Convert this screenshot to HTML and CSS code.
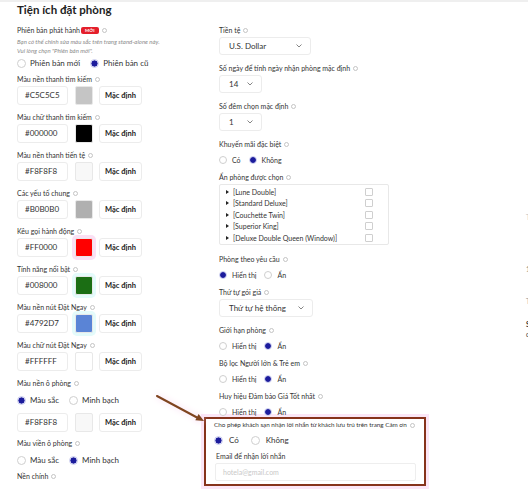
FILE: index.html
```html
<!DOCTYPE html>
<html lang="vi">
<head>
<meta charset="utf-8">
<link rel="stylesheet" href="styles.css">
</head>
<body>
<div class="topbar"></div>
<div class="page">
  <h1 class="title">Tiện ích đặt phòng</h1>
  <div class="cols">
    <div class="col left">
      <div class="lbl">Phiên bản phát hành<span class="badge">MỚI</span><i class="info"></i></div>
      <p class="desc">Bạn có thể chỉnh sửa màu sắc trên trang stand-alone này.<br>Vui lòng chọn "Phiên bản mới".</p>
      <div class="radios big first">
        <span class="opt"><i class="rd"></i>Phiên bản mới</span>
        <span class="opt"><i class="rd on"></i>Phiên bản cũ</span>
      </div>

      <div class="lbl">Màu nền thanh tìm kiếm<i class="info"></i></div>
      <div class="crow"><span class="cin">#C5C5C5</span><span class="sw" style="background:#C5C5C5"></span><span class="btn">Mặc định</span></div>

      <div class="lbl">Màu chữ thanh tìm kiếm<i class="info"></i></div>
      <div class="crow"><span class="cin">#000000</span><span class="sw" style="background:#000000"></span><span class="btn">Mặc định</span></div>

      <div class="lbl">Màu nền thanh tiến tệ<i class="info"></i></div>
      <div class="crow"><span class="cin">#F8F8F8</span><span class="sw" style="background:#F8F8F8"></span><span class="btn">Mặc định</span></div>

      <div class="lbl">Các yếu tố chung<i class="info"></i></div>
      <div class="crow"><span class="cin">#B0B0B0</span><span class="sw" style="background:#B0B0B0"></span><span class="btn">Mặc định</span></div>

      <div class="lbl">Kêu gọi hành động<i class="info"></i></div>
      <div class="crow"><span class="cin">#FF0000</span><span class="sw halo-pink" style="background:#FF0000"></span><span class="btn">Mặc định</span></div>

      <div class="lbl">Tính năng nổi bật<i class="info"></i></div>
      <div class="crow"><span class="cin">#008000</span><span class="sw halo-cyan" style="background:#1b6e14"></span><span class="btn">Mặc định</span></div>

      <div class="lbl">Màu nền nút Đặt Ngay<i class="info"></i></div>
      <div class="crow"><span class="cin">#4792D7</span><span class="sw halo-cyan" style="background:#5a84d6"></span><span class="btn">Mặc định</span></div>

      <div class="lbl">Màu chữ nút Đặt Ngay<i class="info"></i></div>
      <div class="crow"><span class="cin">#FFFFFF</span><span class="sw" style="background:#FFFFFF"></span><span class="btn">Mặc định</span></div>

      <div class="lbl">Màu nền ô phòng<i class="info"></i></div>
      <div class="radios big withrow">
        <span class="opt"><i class="rd on"></i>Màu sắc</span>
        <span class="opt"><i class="rd"></i>Minh bạch</span>
      </div>
      <div class="crow after"><span class="cin">#F8F8F8</span><span class="sw" style="background:#F8F8F8"></span><span class="btn">Mặc định</span></div>

      <div class="lbl">Màu viền ô phòng<i class="info"></i></div>
      <div class="radios big plain">
        <span class="opt"><i class="rd"></i>Màu sắc</span>
        <span class="opt"><i class="rd on"></i>Minh bạch</span>
      </div>

      <div class="lbl">Nền chính<i class="info"></i></div>
      <div class="radios big plain">
        <span class="opt"><i class="rd"></i>Màu sắc</span>
        <span class="opt"><i class="rd on"></i>Minh bạch</span>
      </div>
    </div>

    <div class="col right">
      <div class="lbl">Tiền tệ<i class="info"></i></div>
      <div class="sel w92">U.S. Dollar<svg class="chev" viewBox="0 0 6 4"><polyline points="0.5,0.5 3,3 5.5,0.5"/></svg></div>

      <div class="lbl">Số ngày để tính ngày nhận phòng mặc định<i class="info"></i></div>
      <div class="sel w43">14<svg class="chev" viewBox="0 0 6 4"><polyline points="0.5,0.5 3,3 5.5,0.5"/></svg></div>

      <div class="lbl">Số đêm chọn mặc định<i class="info"></i></div>
      <div class="sel w43">1<svg class="chev" viewBox="0 0 6 4"><polyline points="0.5,0.5 3,3 5.5,0.5"/></svg></div>

      <div class="lbl">Khuyến mãi đặc biệt<i class="info"></i></div>
      <div class="radios small">
        <span class="opt"><i class="rd"></i>Có</span>
        <span class="opt"><i class="rd on"></i>Không</span>
      </div>

      <div class="lbl">Ẩn phòng được chọn<i class="info"></i></div>
      <ul class="hidebox">
        <li class="hitem"><span class="tri"></span><span class="hname">[Lune Double]</span><span class="cb"></span></li>
        <li class="hitem"><span class="tri"></span><span class="hname">[Standard Deluxe]</span><span class="cb"></span></li>
        <li class="hitem"><span class="tri"></span><span class="hname">[Couchette Twin]</span><span class="cb"></span></li>
        <li class="hitem"><span class="tri"></span><span class="hname">[Superior King]</span><span class="cb"></span></li>
        <li class="hitem"><span class="tri"></span><span class="hname">[Deluxe Double Queen (Window)]</span><span class="cb"></span></li>
      </ul>

      <div class="lbl">Phòng theo yêu cầu<i class="info"></i></div>
      <div class="radios small">
        <span class="opt"><i class="rd on"></i>Hiển thị</span>
        <span class="opt"><i class="rd"></i>Ẩn</span>
      </div>

      <div class="lbl">Thứ tự gói giá<i class="info"></i></div>
      <div class="sel w94">Thứ tự hệ thống<svg class="chev" viewBox="0 0 6 4"><polyline points="0.5,0.5 3,3 5.5,0.5"/></svg></div>

      <div class="lbl">Giới hạn phòng<i class="info"></i></div>
      <div class="radios small">
        <span class="opt"><i class="rd"></i>Hiển thị</span>
        <span class="opt"><i class="rd on"></i>Ẩn</span>
      </div>

      <div class="lbl">Bộ lọc Người lớn &amp; Trẻ em<i class="info"></i></div>
      <div class="radios small">
        <span class="opt"><i class="rd"></i>Hiển thị</span>
        <span class="opt"><i class="rd on"></i>Ẩn</span>
      </div>

      <div class="lbl">Huy hiệu Đảm bảo Giá Tốt nhất<i class="info"></i></div>
      <div class="radios small last">
        <span class="opt"><i class="rd"></i>Hiển thị</span>
        <span class="opt"><i class="rd on"></i>Ẩn</span>
      </div>

      <div class="msgbox">
        <div class="lbl msg">Cho phép khách sạn nhận lời nhắn từ khách lưu trú trên trang Cảm ơn<i class="info"></i></div>
        <div class="radios big inbox">
          <span class="opt"><i class="rd on"></i>Có</span>
          <span class="opt"><i class="rd"></i>Không</span>
        </div>
        <div class="lbl email">Email để nhận lời nhắn</div>
        <div class="emailin">hotela@gmail.com</div>
      </div>
    </div>

    <div class="col far">
      <div class="fl f1">T</div>
      <div class="fl f2">1</div>
      <div class="fl f3">T</div>
      <div class="fl f4">S</div>
      <div class="fl f5">c</div>
    </div>
  </div>
</div>
<svg class="arrow" width="64" height="40" viewBox="0 0 64 40">
  <line x1="7" y1="6" x2="47" y2="27.5" stroke="#7f4520" stroke-width="2" stroke-linecap="round"/>
  <polygon points="54,31 45.3,30.3 48.6,24.1" fill="#7f4520"/>
</svg>
</body>
</html>
```

FILE: styles.css
```css
* { box-sizing: border-box; margin: 0; padding: 0; }

body {
  width: 528px;
  height: 489px;
  overflow: hidden;
  background: #fff;
  font-family: "Lato", "Noto Sans", sans-serif;
  color: #333;
  position: relative;
}

.topbar { height: 2px; background: #efefef; }

.page { padding-left: 17px; }

.title {
  font-size: 11.5px;
  font-weight: 700;
  line-height: 16px;
  color: #222;
  margin-bottom: 7px;
}

.cols { display: flex; }
.col.left { width: 202px; flex: none; }
.col.right { width: 307px; flex: none; }
.col.far { width: 40px; flex: none; }

.lbl {
  font-size: 7px;
  line-height: 10px;
  height: 10px;
  color: #333;
  display: flex;
  align-items: center;
  white-space: nowrap;
}

.info {
  display: inline-block;
  width: 5px;
  height: 5px;
  border: 1px solid #c4c4c4;
  border-radius: 50%;
  margin-left: 3px;
}

.badge {
  display: inline-block;
  background: #e41f2b;
  color: #fff;
  font-size: 4.5px;
  font-weight: 700;
  line-height: 7px;
  height: 7px;
  padding: 0 4px;
  border-radius: 2px;
  margin-left: 1px;
}

.desc {
  margin-top: 2px;
  font-size: 6px;
  line-height: 9px;
  font-style: italic;
  color: #8a8a8a;
}

/* colour rows */
.crow {
  display: flex;
  height: 19px;
  margin-top: 2px;
  margin-bottom: 7px;
}
.crow.after { margin-top: 6px; margin-bottom: 6px; }

.cin {
  width: 51px;
  border: 1px solid #ececec;
  border-radius: 3px;
  font-size: 8px;
  line-height: 17px;
  padding-left: 7px;
  color: #333;
}
.sw {
  width: 18px;
  margin-left: 7px;
  border: 1px solid #e8e8e8;
  border-radius: 2px;
}
.halo-pink { box-shadow: 0 0 0 3px #fbe0f4; }
.halo-cyan { box-shadow: 0 0 0 3px #e4fbfb; }
.btn {
  width: 43px;
  margin-left: 6px;
  border: 1px solid #ececec;
  border-radius: 3px;
  font-size: 7.5px;
  font-weight: 700;
  line-height: 17px;
  text-align: center;
  color: #222;
}

/* radios */
.radios {
  display: flex;
  align-items: center;
  height: 14px;
  color: #333;
}
.radios.big { font-size: 8px; }
.radios.small { font-size: 7px; margin-top: 4px; margin-bottom: 5px; }
.radios.first { margin-top: 1px; margin-bottom: 4px; }
.radios.withrow { margin-top: 5px; }
.radios.plain { margin-top: 5px; margin-bottom: 4px; }
.radios.last { margin-bottom: 0; }

.opt {
  display: flex;
  align-items: center;
  margin-right: 10px;
}
.rd {
  display: inline-block;
  width: 9px;
  height: 9px;
  border-radius: 50%;
  border: 1px solid #cfcfcf;
  background: #fff;
  margin-right: 4px;
}
.radios.small .rd { width: 8px; height: 8px; margin-right: 5px; }
.radios.small .opt { margin-right: 8px; }
.rd.on {
  border-color: #c9cbee;
  background: radial-gradient(circle, #1c1c9c 0 2.8px, #e4e5f8 3.4px);
}

/* selects */
.sel {
  margin-top: 2px;
  margin-bottom: 8px;
  height: 18px;
  border: 1px solid #ececec;
  border-radius: 3px;
  display: flex;
  align-items: center;
  justify-content: space-between;
  padding: 0 8px 0 9px;
  font-size: 8px;
  color: #333;
}
.w92 { width: 92px; }
.w43 { width: 43px; }
.w94 { width: 94px; }
.chev {
  width: 6px;
  height: 4px;
  fill: none;
  stroke: #777;
  stroke-width: 0.9;
}

/* hidden rooms box */
.hidebox {
  list-style: none;
  margin-top: 2px;
  margin-bottom: 9px;
  width: 170px;
  height: 61px;
  border: 1px solid #e8e8e8;
  border-radius: 2px;
  padding: 1px 0 0 6px;
}
.hitem {
  display: flex;
  align-items: center;
  height: 11.5px;
  font-size: 7px;
  color: #333;
}
.tri {
  width: 0;
  height: 0;
  border-left: 3px solid #222;
  border-top: 2px solid transparent;
  border-bottom: 2px solid transparent;
  margin-right: 4px;
}
.hname { width: 132px; white-space: nowrap; }
.cb {
  width: 8px;
  height: 8px;
  border: 1px solid #cfcfcf;
  border-radius: 1px;
}

/* message box */
.msgbox {
  margin: -2px 0 0 -15px;
  width: 222px;
  height: 69px;
  border: 2px solid #86331b;
  box-shadow: 0 0 0 3px #fbe6f6;
  padding: 1px 8px 0 8px;
  background: #fff;
}
.lbl.msg { font-size: 6.3px; }
.radios.inbox { margin-top: 3px; }
.radios.inbox .opt { margin-right: 12px; }
.radios.inbox .rd { margin-right: 6px; }
.lbl.email { margin-top: 4px; font-size: 7px; padding-left: 2px; }
.emailin {
  margin-top: 2px;
  margin-left: 1px;
  width: 201px;
  height: 18px;
  border: 1px solid #eeeeee;
  border-radius: 2px;
  font-size: 7px;
  line-height: 16px;
  padding-left: 7px;
  color: #c8c8c8;
}

/* cut-off third column */
.far .fl { font-size: 7px; line-height: 8px; color: #555; padding-left: 0; }
.far .f1 { margin-top: 188px; color: #ccc; }
.far .f2 { margin-top: 44px; color: #888; }
.far .f3 { margin-top: 24px; color: #aaa; }
.far .f4 { margin-top: 15px; color: #333; font-weight: 700; }
.far .f5 { margin-top: 2px; color: #444; }

/* annotation arrow */
.arrow {
  position: absolute;
  left: 150px;
  top: 390px;
  filter: drop-shadow(0 0 3px #f8d3ef);
}
```
